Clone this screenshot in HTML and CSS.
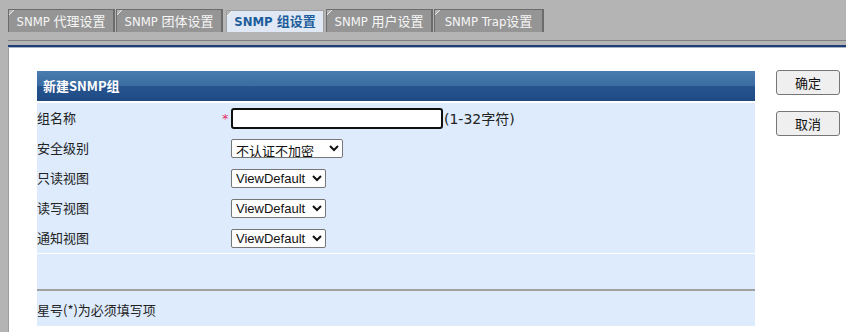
FILE: index.html
```html
<!DOCTYPE html>
<html lang="zh">
  <head>
    <meta charset="utf-8">
    <link rel="stylesheet" href="styles.css">
    <title>SNMP 组设置</title>
  </head>

  <body>
    <div class="tabBar">
      <div class="tab">SNMP 代理设置</div>
      <div class="tab">SNMP 团体设置</div>
      <div class="tab activeTab">SNMP 组设置</div>
      <div class="tab">SNMP 用户设置</div>
      <div class="tab">SNMP Trap设置</div>
    </div>
    <div class="tabLines"></div>

    <div class="mainDiv">
      <div class="sideStrip"></div>
      <div class="contentDiv">
        <div class="formDiv">
          <div class="formTitle">新建SNMP组</div>

          <div class="formRows">
            <div class="formRow">
              <span class="rowLabel">组名称</span>
              <span class="required">*</span>
              <input type="text" class="nameInput">
              <span class="hint">(1-32字符)</span>
            </div>
            <div class="formRow">
              <span class="rowLabel">安全级别</span>
              <span class="required"></span>
              <select class="levelSelect">
                <option>不认证不加密</option>
                <option>认证不加密</option>
                <option>认证并加密</option>
              </select>
            </div>
            <div class="formRow">
              <span class="rowLabel">只读视图</span>
              <span class="required"></span>
              <select class="viewSelect"><option>ViewDefault</option></select>
            </div>
            <div class="formRow">
              <span class="rowLabel">读写视图</span>
              <span class="required"></span>
              <select class="viewSelect"><option>ViewDefault</option></select>
            </div>
            <div class="formRow">
              <span class="rowLabel">通知视图</span>
              <span class="required"></span>
              <select class="viewSelect"><option>ViewDefault</option></select>
            </div>
          </div>

          <div class="emptyRow"></div>
          <div class="footNote">星号(*)为必须填写项</div>
        </div>

        <div class="buttonCol">
          <button class="actionButton">确定</button>
          <button class="actionButton">取消</button>
        </div>
      </div>
    </div>
  </body>
</html>
```

FILE: styles.css
```css
body {
  margin: 0;
  background-color: #b4b4b4;
  font-family: "DejaVu Sans", "Noto Sans CJK SC", sans-serif;
  font-size: 13px;
}

/* tabs ------------------------------------------------------------ */
.tabBar {
  display: flex;
  align-items: flex-end;
  height: 32px;
  padding-left: 8px;
  box-sizing: border-box;
}

.tab {
  width: 107px;
  box-sizing: border-box;
  height: 23px;
  line-height: 23px;
  margin-right: 1px;
  text-align: center;
  font-family: "DejaVu Sans Condensed", "DejaVu Sans", "Noto Sans CJK SC", sans-serif;
  color: #f6f6f6;
  background: linear-gradient(135deg, transparent 3px, #e8e8e8 3px, #e8e8e8 4px, #959595 4px);
  border-top: 1px solid #6c6c6c;
  border-right: 2px solid #6c6c6c;
  border-left: 1px solid #6c6c6c;
  white-space: nowrap;
}

.tab:last-child {
  width: 110px;
}

.activeTab {
  width: 98px;
  height: 22px;
  line-height: 22px;
  margin: 0 2px 0 2px;
  color: #1d5d9c;
  font-weight: bold;
  background: linear-gradient(135deg, transparent 3px, #f4f4f4 3px, #f4f4f4 4px, #dfe8f4 4px);
  border-color: #a0a0a0;
  border-right-width: 1px;
}

.tabLines {
  height: 16px;
  box-sizing: border-box;
  border-top: 1px solid #808080;
  margin-top: 8px;
  background: linear-gradient(#b4b4b4 0 4px, #1f3e78 4px 6px, #a9b2c0 6px 7px, #ffffff 7px);
  margin-left: 8px;
}

/* page body ------------------------------------------------------- */
.mainDiv {
  display: flex;
  margin-top: -8px;
  height: 292px;
}

.sideStrip {
  width: 8px;
  background-color: #b4b4b4;
  border-right: 1px solid #9c9c9c;
}

.contentDiv {
  flex: 1;
  display: flex;
  background-color: #ffffff;
  padding: 23px 0 0 28px;
}

.formDiv {
  width: 718px;
  font-family: "Noto Sans CJK SC", "DejaVu Sans", sans-serif;
  color: #222;
}

.formTitle {
  height: 30px;
  line-height: 30px;
  padding-left: 6px;
  color: #ffffff;
  font-weight: bold;
  background: linear-gradient(#4a7cae 0%, #3a6ba1 50%, #27548f 51%, #1e4a84 100%);
  margin-bottom: 2px;
}

.formRows {
  background-color: #ddebfc;
  border-bottom: 1px solid #ffffff;
}

.formRow {
  display: flex;
  align-items: center;
  height: 30px;
}

.rowLabel {
  width: 185px;
  margin-top: -2px;
}

.required {
  width: 9px;
  color: #e8306a;
  font-family: "DejaVu Sans", sans-serif;
  font-size: 13px;
  line-height: 13px;
  align-self: flex-start;
  margin-top: 9px;
}

.nameInput {
  width: 212px;
  height: 21px;
  box-sizing: border-box;
  border: 2px solid #101010;
  border-radius: 3px;
  outline: none;
  margin: 0;
}

.hint {
  padding-left: 1px;
  font-family: "DejaVu Sans", "Noto Sans CJK SC", sans-serif;
  font-size: 14px;
}

select {
  height: 19px;
  box-sizing: border-box;
  margin: 0;
  border: 1px solid #767676;
  border-radius: 2px;
  background-color: #ffffff;
  font-family: "Liberation Sans", "Noto Sans CJK SC", sans-serif;
  font-size: 13px;
  color: #111;
  padding: 0;
}

.levelSelect {
  width: 112px;
  font-family: "Noto Sans CJK SC", sans-serif;
}

.viewSelect {
  width: 95px;
}

.emptyRow {
  height: 35px;
  background-color: #ddebfc;
  border-bottom: 2px solid #a0a0a0;
}

.footNote {
  height: 35px;
  line-height: 38px;
  background-color: #ddebfc;
  font-size: 13px;
}

/* buttons --------------------------------------------------------- */
.buttonCol {
  display: flex;
  flex-direction: column;
  gap: 16px;
  margin-left: 21px;
  margin-top: -1px;
}

.actionButton {
  width: 64px;
  height: 25px;
  background-color: #efefef;
  border: 1px solid #767676;
  border-radius: 3px;
  font-family: "Noto Sans CJK SC", sans-serif;
  font-size: 13px;
  color: #111;
  padding: 0;
}
```
